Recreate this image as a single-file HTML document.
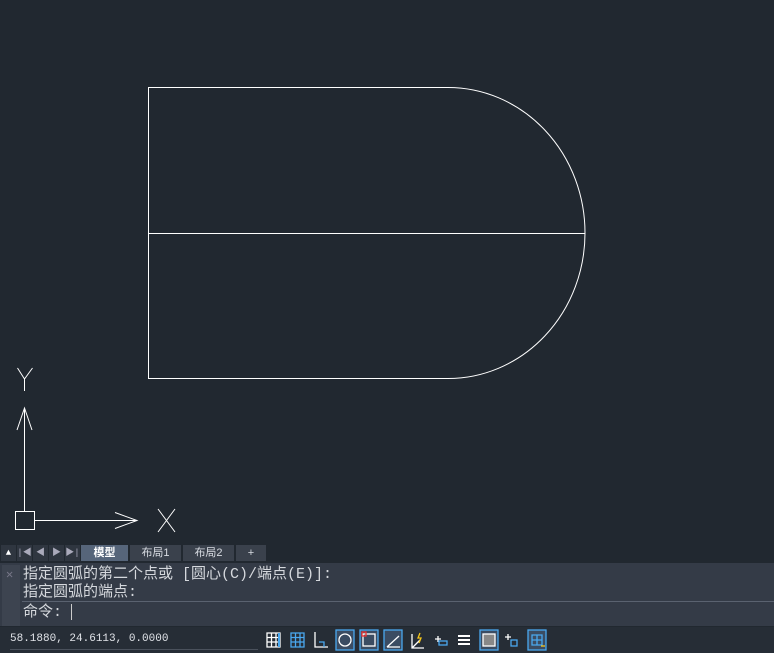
<!DOCTYPE html>
<html><head><meta charset="utf-8"><style>
body{margin:0;width:774px;height:653px;background:#212830;overflow:hidden;position:relative;font-family:"Liberation Mono","Noto Sans CJK SC",monospace}
.tabs{position:absolute;left:0;top:544px;width:774px;height:18px;background:#212830}
.tab{position:absolute;top:1px;height:16px;background:#3a414c;color:#d8dce2;font:11px "Liberation Sans","Noto Sans CJK SC",sans-serif;text-align:center;line-height:16px}
.nav{position:absolute;top:1px;width:15px;height:16px;background:#2f3640;color:#aab;font-size:9px;text-align:center;line-height:16px}
.cmd{position:absolute;left:0;top:563px;width:774px;height:63px;background:#343b47}
.cmd .side{position:absolute;left:2px;top:2px;width:18px;height:61px;background:#3d4450}
.cmd .txt{position:absolute;left:23px;color:#d5d8dd;font-size:15px;line-height:18px;white-space:nowrap}
.status{position:absolute;left:0;top:627px;width:774px;height:26px;background:#262d36}
</style></head><body>
<svg width="774" height="544" style="position:absolute;left:0;top:0" fill="none" stroke="#fff" stroke-width="1">
<path d="M448 87.5H148.5V378.5H448M148.5 233.5H585"/>
<path d="M448 87.5A137 145.5 0 0 1 585 233A137 145.5 0 0 1 448 378.5"/>
<path d="M17.5 368L24.5 379L32.5 368M24.5 379V391"/>
<path d="M24.5 408V511M17 430L24.5 408L32 430"/>
<rect x="15.5" y="511.5" width="19" height="18"/>
<path d="M34.5 520.5H137M115 512.5L137 520.5L115 528.5"/>
<path d="M158 509L175 532M175 509L158 532"/>
</svg>
<div class="tabs">
<div class="nav" style="left:1px;color:#fff">▲</div>
<div class="nav" style="left:17px">|◀</div>
<div class="nav" style="left:33px">◀</div>
<div class="nav" style="left:49px">▶</div>
<div class="nav" style="left:65px">▶|</div>
<div class="tab" style="left:81px;width:47px;background:#56657a;color:#fff;font-weight:bold">模型</div>
<div class="tab" style="left:130px;width:51px">布局1</div>
<div class="tab" style="left:183px;width:51px">布局2</div>
<div class="tab" style="left:236px;width:30px">+</div>
</div>
<div class="cmd">
<div class="side"><span style="position:absolute;left:4px;top:2px;color:#778;font-size:12px">✕</span></div>
<div class="txt" style="top:3px">指定圆弧的第二个点或 [圆心(C)/端点(E)]:</div>
<div class="txt" style="top:21px">指定圆弧的端点:</div>
<div style="position:absolute;left:22px;top:38px;width:752px;height:1px;background:#5a6270"></div>
<div class="txt" style="top:41px">命令: <span style="display:inline-block;width:1px;height:16px;background:#ccc;vertical-align:middle"></span></div>
</div>
<div class="status">
<div style="position:absolute;left:10px;top:6px;color:#e0e3e8;font-size:11px">58.1880, 24.6113, 0.0000</div>
<div style="position:absolute;left:10px;top:22px;width:248px;height:1px;background:#4a515c"></div>
<svg width="300" height="26" style="position:absolute;left:250px;top:0" fill="none" stroke="#fff" stroke-width="1.3">
<path d="M17 6h13v14H17zM17 10.5h13M17 15h13M21.5 6v14M26 6v14"/><path d="M29 6v14" stroke="#4aa8f0" stroke-width="2"/>
<path d="M41 6h13v14H41zM41 10.5h13M41 15h13M45.5 6v14M50 6v14" stroke="#4aa8f0"/>
<path d="M65 5v15h13"/><path d="M69 15h5v5" stroke="#4aa8f0"/>
<rect x="86" y="3" width="18" height="20" fill="#3b4c62" stroke="#4aa8f0"/><circle cx="95" cy="13" r="6"/>
<rect x="110" y="3" width="18" height="20" fill="#3b4c62" stroke="#4aa8f0"/><rect x="113" y="7" width="12" height="12"/><rect x="112" y="5" width="4" height="4" stroke="#e33"/>
<rect x="134" y="3" width="18" height="20" fill="#3b4c62" stroke="#4aa8f0"/><path d="M137 20L149 9M137 20h13"/>
<path d="M162 7v14h12M162 21l8-8" /><path d="M170 6l-2 5h3l-2 5" stroke="#f5c518"/>
<path d="M185 12h6M188 9v6"/><rect x="189" y="14" width="8" height="4" stroke="#4aa8f0"/>
<path d="M208 9h12M208 13h12M208 17h12" stroke-width="2"/>
<rect x="230" y="3" width="18" height="20" fill="#3b4c62" stroke="#4aa8f0"/><rect x="233" y="7" width="12" height="12" fill="#888"/>
<path d="M255 10h6M258 7v6"/><rect x="261" y="13" width="6" height="6" stroke="#4aa8f0"/>
<rect x="278" y="3" width="18" height="20" fill="#3b4c62" stroke="#4aa8f0"/><path d="M282 8h10v10h-10zM287 8v10M282 13h10" stroke="#4aa8f0"/><path d="M291 19h4" stroke="#f5c518"/>
</svg>
</div>
</body></html>
